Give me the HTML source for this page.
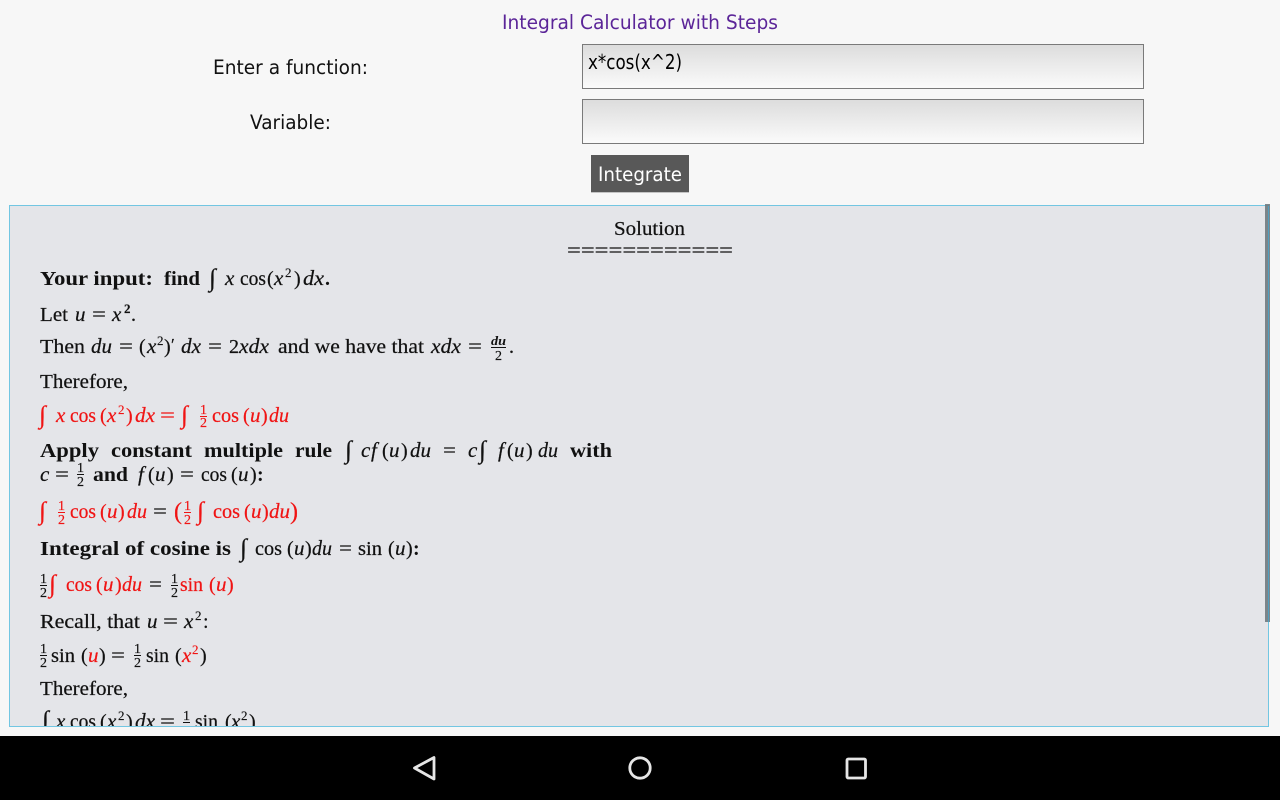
<!DOCTYPE html>
<html><head><meta charset="utf-8"><style>
html,body{margin:0;padding:0;width:1280px;height:800px;overflow:hidden;background:#f7f7f7}
svg{position:absolute;left:0;top:0;display:block}
.u{font-family:"DejaVu Sans",sans-serif;font-size:19.5px;fill:#111}
.t{font-family:"Liberation Serif",serif;font-size:20px;fill:#111;stroke:#111;stroke-width:.22px}
.b{font-family:"Liberation Serif",serif;font-size:20px;font-weight:bold;fill:#111}
.i{font-family:"Liberation Serif",serif;font-size:21px;font-style:italic;fill:#111;stroke:#111;stroke-width:.22px}
.s{font-family:"Liberation Serif",serif;font-size:13px;fill:#111;stroke:#111;stroke-width:.15px}
.f{font-family:"Liberation Serif",serif;font-size:14px;fill:#111;stroke:#111;stroke-width:.2px}
.fi{font-family:"Liberation Serif",serif;font-size:13px;font-style:italic;fill:#111;font-weight:bold}
.big{font-family:"Liberation Serif",serif;font-size:25px;font-style:italic;fill:#111;stroke:#111;stroke-width:.2px}
.r text,text.r{fill:#f01414;stroke:#f01414}
.k,.r text.k{fill:#111;stroke:#111}
.math{filter:blur(.35px)}
</style></head><body>
<svg width="1280" height="800" viewBox="0 0 1280 800" xmlns="http://www.w3.org/2000/svg">
<defs><linearGradient id="g" x1="0" y1="0" x2="0" y2="1"><stop offset="0" stop-color="#dcdcdc"/><stop offset="1" stop-color="#fbfbfb"/></linearGradient></defs>
<rect width="1280" height="800" fill="#f7f7f7"/>
<text class="u" x="502" y="29" textLength="276" lengthAdjust="spacingAndGlyphs" style="fill:#5b2598">Integral Calculator with Steps</text>
<text class="u" x="213" y="74" textLength="155" lengthAdjust="spacingAndGlyphs">Enter a function:</text>
<text class="u" x="250" y="129" textLength="81" lengthAdjust="spacingAndGlyphs">Variable:</text>
<rect x="582.5" y="44.5" width="561" height="44" fill="url(#g)" stroke="#7a7a7a"/>
<rect x="582.5" y="99.5" width="561" height="44" fill="url(#g)" stroke="#7a7a7a"/>
<text class="u" x="588" y="69" textLength="94" lengthAdjust="spacingAndGlyphs" style="fill:#000;font-size:20px">x*cos(x^2)</text>
<rect x="591" y="156" width="98" height="37" fill="#c4c4c4"/>
<rect x="591" y="155" width="98" height="37" fill="#585858"/>
<text class="u" x="598" y="181" textLength="84" lengthAdjust="spacingAndGlyphs" style="fill:#fff">Integrate</text>

<rect x="9" y="205" width="1260" height="522" fill="#e4e5e9"/>
<g class="math">
<text class="t" x="614" y="235" textLength="71" lengthAdjust="spacingAndGlyphs">Solution</text>
<text class="t" x="567" y="257" textLength="166" lengthAdjust="spacingAndGlyphs">============</text>

<text class="b" x="40" y="285" textLength="113" lengthAdjust="spacingAndGlyphs">Your input:</text>
<text class="b" x="164" y="285" textLength="36" lengthAdjust="spacingAndGlyphs">find</text>
<text class="big" x="209" y="286">∫</text><text class="i" x="225" y="285">x</text>
<text class="t" x="240" y="285" textLength="26" lengthAdjust="spacingAndGlyphs">cos</text>
<text class="t" x="267" y="285">(</text><text class="i" x="274" y="285">x</text><text class="s" x="285" y="277">2</text>
<text class="t" x="294" y="285">)</text><text class="i" x="303" y="285" textLength="21" lengthAdjust="spacingAndGlyphs">dx</text><text class="b" x="325" y="285">.</text>

<text class="t" x="40" y="321" textLength="28" lengthAdjust="spacingAndGlyphs">Let</text>
<text class="i" x="75" y="321">u</text><text class="t" x="92" y="321" textLength="14" lengthAdjust="spacingAndGlyphs">=</text>
<text class="i" x="112" y="321">x</text><text class="s" x="124" y="313" style="font-weight:bold">2</text><text class="t" x="131" y="321">.</text>

<text class="t" x="40" y="353" textLength="45" lengthAdjust="spacingAndGlyphs">Then</text>
<text class="i" x="91" y="353" textLength="21" lengthAdjust="spacingAndGlyphs">du</text>
<text class="t" x="119" y="353" textLength="14" lengthAdjust="spacingAndGlyphs">=</text>
<text class="t" x="139" y="353">(</text><text class="i" x="147" y="353">x</text><text class="s" x="157" y="345">2</text><text class="t" x="164" y="353">)</text><text class="t" x="171" y="350" style="font-size:17px">′</text>
<text class="i" x="181" y="353" textLength="20" lengthAdjust="spacingAndGlyphs">dx</text>
<text class="t" x="208" y="353" textLength="14" lengthAdjust="spacingAndGlyphs">=</text>
<text class="t" x="229" y="353">2</text><text class="i" x="239" y="353" textLength="30" lengthAdjust="spacingAndGlyphs">xdx</text>
<text class="t" x="278" y="353" textLength="146" lengthAdjust="spacingAndGlyphs">and we have that</text>
<text class="i" x="431" y="353" textLength="30" lengthAdjust="spacingAndGlyphs">xdx</text>
<text class="t" x="468" y="353" textLength="14" lengthAdjust="spacingAndGlyphs">=</text>
<text class="fi" x="491" y="345" textLength="15" lengthAdjust="spacingAndGlyphs">du</text><rect x="491" y="347" width="15" height="1" fill="#111"/><text class="f" x="495" y="360">2</text>
<text class="t" x="509" y="353">.</text>

<text class="t" x="40" y="388" textLength="88" lengthAdjust="spacingAndGlyphs">Therefore,</text>

<g class="r">
<text class="big" x="39" y="423">∫</text><text class="i" x="56" y="422">x</text>
<text class="t" x="70" y="422" textLength="26" lengthAdjust="spacingAndGlyphs">cos</text>
<text class="t" x="100" y="422">(</text><text class="i" x="107" y="422">x</text><text class="s" x="118" y="414">2</text><text class="t" x="126" y="422">)</text>
<text class="i" x="135" y="422" textLength="20" lengthAdjust="spacingAndGlyphs">dx</text>
<text class="t" x="160" y="422" textLength="15" lengthAdjust="spacingAndGlyphs">=</text>
<text class="big" x="181" y="423">∫</text>
<text class="f" x="200" y="414">1</text><rect x="200" y="416" width="7" height="1" fill="#f01414"/><text class="f" x="200" y="427">2</text>
<text class="t" x="212" y="422" textLength="27" lengthAdjust="spacingAndGlyphs">cos</text>
<text class="t" x="243" y="422">(</text><text class="i" x="250" y="422">u</text><text class="t" x="261" y="422">)</text>
<text class="i" x="269" y="422" textLength="20" lengthAdjust="spacingAndGlyphs">du</text>
</g>

<text class="b" x="40" y="457" textLength="59" lengthAdjust="spacingAndGlyphs">Apply</text>
<text class="b" x="111" y="457" textLength="81" lengthAdjust="spacingAndGlyphs">constant</text>
<text class="b" x="204" y="457" textLength="79" lengthAdjust="spacingAndGlyphs">multiple</text>
<text class="b" x="295" y="457" textLength="37" lengthAdjust="spacingAndGlyphs">rule</text>
<text class="big" x="345" y="458">∫</text>
<text class="i" x="361" y="457">c</text><text class="i" x="371" y="457">f</text>
<text class="t" x="382" y="457">(</text><text class="i" x="389" y="457">u</text><text class="t" x="401" y="457">)</text>
<text class="i" x="410" y="457" textLength="21" lengthAdjust="spacingAndGlyphs">du</text>
<text class="t" x="443" y="457" textLength="13" lengthAdjust="spacingAndGlyphs">=</text>
<text class="i" x="468" y="457">c</text><text class="big" x="479" y="458">∫</text>
<text class="i" x="498" y="457">f</text>
<text class="t" x="507" y="457">(</text><text class="i" x="514" y="457">u</text><text class="t" x="526" y="457">)</text>
<text class="i" x="538" y="457" textLength="20" lengthAdjust="spacingAndGlyphs">du</text>
<text class="b" x="570" y="457" textLength="42" lengthAdjust="spacingAndGlyphs">with</text>

<text class="i" x="40" y="481">c</text><text class="t" x="55" y="481" textLength="14" lengthAdjust="spacingAndGlyphs">=</text>
<text class="f" x="77" y="472">1</text><rect x="77" y="474" width="7" height="1" fill="#111"/><text class="f" x="77" y="486">2</text>
<text class="b" x="93" y="481" textLength="35" lengthAdjust="spacingAndGlyphs">and</text>
<text class="i" x="138" y="481">f</text>
<text class="t" x="148" y="481">(</text><text class="i" x="155" y="481">u</text><text class="t" x="167" y="481">)</text>
<text class="t" x="180" y="481" textLength="14" lengthAdjust="spacingAndGlyphs">=</text>
<text class="t" x="201" y="481" textLength="26" lengthAdjust="spacingAndGlyphs">cos</text>
<text class="t" x="231" y="481">(</text><text class="i" x="238" y="481">u</text><text class="t" x="250" y="481">)</text><text class="b" x="257" y="481">:</text>

<g class="r">
<text class="big" x="39" y="519">∫</text>
<text class="f" x="58" y="510">1</text><rect x="58" y="512" width="7" height="1" fill="#f01414"/><text class="f" x="58" y="524">2</text>
<text class="t" x="70" y="518" textLength="26" lengthAdjust="spacingAndGlyphs">cos</text>
<text class="t" x="100" y="518">(</text><text class="i" x="107" y="518">u</text><text class="t" x="118" y="518">)</text>
<text class="i" x="127" y="518" textLength="20" lengthAdjust="spacingAndGlyphs">du</text>
<text class="t k" x="153" y="518" textLength="14" lengthAdjust="spacingAndGlyphs">=</text>
<text class="t" x="174" y="519" style="font-size:24px">(</text>
<text class="f" x="184" y="510">1</text><rect x="184" y="512" width="7" height="1" fill="#f01414"/><text class="f" x="184" y="524">2</text>
<text class="big" x="197" y="519">∫</text>
<text class="t" x="213" y="518" textLength="27" lengthAdjust="spacingAndGlyphs">cos</text>
<text class="t" x="244" y="518">(</text><text class="i" x="251" y="518">u</text><text class="t" x="262" y="518">)</text>
<text class="i" x="269" y="518" textLength="21" lengthAdjust="spacingAndGlyphs">du</text>
<text class="t" x="290" y="519" style="font-size:24px">)</text>
</g>

<text class="b" x="40" y="555" textLength="191" lengthAdjust="spacingAndGlyphs">Integral of cosine is</text>
<text class="big" x="240" y="556">∫</text>
<text class="t" x="255" y="555" textLength="27" lengthAdjust="spacingAndGlyphs">cos</text>
<text class="t" x="287" y="555">(</text><text class="i" x="294" y="555">u</text><text class="t" x="305" y="555">)</text>
<text class="i" x="312" y="555" textLength="20" lengthAdjust="spacingAndGlyphs">du</text>
<text class="t" x="339" y="555" textLength="13" lengthAdjust="spacingAndGlyphs">=</text>
<text class="t" x="358" y="555" textLength="24" lengthAdjust="spacingAndGlyphs">sin</text>
<text class="t" x="388" y="555">(</text><text class="i" x="395" y="555">u</text><text class="t" x="406" y="555">)</text><text class="b" x="413" y="555">:</text>

<text class="f" x="40" y="583">1</text><rect x="40" y="585" width="7" height="1" fill="#111"/><text class="f" x="40" y="597">2</text>
<g class="r">
<text class="big" x="49" y="592">∫</text>
<text class="t" x="66" y="591" textLength="26" lengthAdjust="spacingAndGlyphs">cos</text>
<text class="t" x="96" y="591">(</text><text class="i" x="103" y="591">u</text><text class="t" x="115" y="591">)</text>
<text class="i" x="122" y="591" textLength="20" lengthAdjust="spacingAndGlyphs">du</text>
</g>
<text class="t" x="149" y="591" textLength="13" lengthAdjust="spacingAndGlyphs">=</text>
<text class="f" x="171" y="583">1</text><rect x="171" y="585" width="7" height="1" fill="#111"/><text class="f" x="171" y="597">2</text>
<g class="r">
<text class="t" x="180" y="591" textLength="23" lengthAdjust="spacingAndGlyphs">sin</text>
<text class="t" x="209" y="591">(</text><text class="i" x="216" y="591">u</text><text class="t" x="227" y="591">)</text>
</g>

<text class="t" x="40" y="628" textLength="100" lengthAdjust="spacingAndGlyphs">Recall, that</text>
<text class="i" x="147" y="628">u</text><text class="t" x="163" y="628" textLength="15" lengthAdjust="spacingAndGlyphs">=</text>
<text class="i" x="184" y="628">x</text><text class="s" x="195" y="620">2</text><text class="t" x="203" y="628">:</text>

<text class="f" x="40" y="653">1</text><rect x="40" y="655" width="7" height="1" fill="#111"/><text class="f" x="40" y="667">2</text>
<text class="t" x="51" y="662" textLength="24" lengthAdjust="spacingAndGlyphs">sin</text>
<text class="t" x="81" y="662">(</text><text class="i r" x="88" y="662">u</text><text class="t" x="99" y="662">)</text>
<text class="t" x="111" y="662" textLength="14" lengthAdjust="spacingAndGlyphs">=</text>
<text class="f" x="134" y="653">1</text><rect x="134" y="655" width="7" height="1" fill="#111"/><text class="f" x="134" y="667">2</text>
<text class="t" x="146" y="662" textLength="23" lengthAdjust="spacingAndGlyphs">sin</text>
<text class="t" x="175" y="662">(</text><text class="i r" x="182" y="662">x</text><text class="s r" x="192" y="654">2</text><text class="t" x="200" y="662">)</text>

<text class="t" x="40" y="695" textLength="88" lengthAdjust="spacingAndGlyphs">Therefore,</text>

<text class="big" x="42" y="728">∫</text><text class="i" x="56" y="728">x</text>
<text class="t" x="70" y="728" textLength="26" lengthAdjust="spacingAndGlyphs">cos</text>
<text class="t" x="100" y="728">(</text><text class="i" x="107" y="728">x</text><text class="s" x="118" y="720">2</text><text class="t" x="126" y="728">)</text>
<text class="i" x="135" y="728" textLength="20" lengthAdjust="spacingAndGlyphs">dx</text>
<text class="t" x="160" y="728" textLength="15" lengthAdjust="spacingAndGlyphs">=</text>
<text class="f" x="183" y="720">1</text><rect x="183" y="722" width="7" height="1" fill="#111"/>
<text class="t" x="195" y="728" textLength="23" lengthAdjust="spacingAndGlyphs">sin</text>
<text class="t" x="225" y="728">(</text><text class="i" x="231" y="728">x</text><text class="s" x="241" y="720">2</text><text class="t" x="249" y="728">)</text>
</g>

<rect x="9" y="726" width="1262" height="10" fill="#f7f7f7"/>
<rect x="9.5" y="205.5" width="1259" height="521" fill="none" stroke="#72c6e2"/>
<rect x="1265" y="204" width="5" height="418" fill="#6f7a80" opacity=".9"/>
<rect x="1268" y="206" width="1" height="416" fill="#4f9fc0"/>

<rect x="0" y="736" width="1280" height="64" fill="#000"/>
<path d="M414.5 768 L434 757.5 V779 Z" fill="none" stroke="#e6e6e6" stroke-width="2.8" stroke-linejoin="round"/>
<circle cx="640" cy="768" r="10.2" fill="none" stroke="#e6e6e6" stroke-width="2.8"/>
<rect x="847" y="759" width="18.5" height="19" rx="1.2" fill="none" stroke="#e6e6e6" stroke-width="2.8"/>
</svg>
</body></html>
